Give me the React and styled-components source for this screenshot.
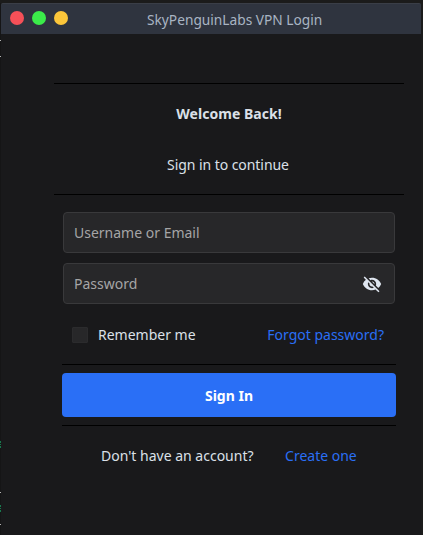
import React from "react";
import styled, { createGlobalStyle } from "styled-components";
import { MdVisibilityOff } from "react-icons/md";

const GlobalStyle = createGlobalStyle`
  * { box-sizing: border-box; }
  body { margin: 0; background: #1b1b1b; }
  button, input { font: inherit; }
`;

const Desktop = styled.div`
  display: grid;
  grid-template-columns: 1px 420px 2px;
  width: 423px;
  height: 535px;
  padding-top: 3px;
  overflow: hidden;
  background: #1b1b1b;
  font: 14px/20px "Noto Sans", sans-serif;
  color: #dbe0e8;
`;

const Backdrop = styled.div`
  display: flex;
  flex-direction: column;
  background: #151516;
`;

const Speck = styled.span`
  height: ${(p) => p.$h || 1}px;
  margin-top: ${(p) => p.$gap}px;
  background: ${(p) => p.$color || "#b5b5b5"};
`;

const Window = styled.main`
  display: flex;
  flex-direction: column;
  background: #19191b;
`;

const TitleBar = styled.header`
  display: grid;
  grid-template-columns: 146px 1fr;
  align-items: center;
  height: 31px;
  flex: none;
  border-top: 1px solid #3a3e47;
  border-radius: 2px 2px 0 0;
  background: #2f343f;
`;

const Controls = styled.div`
  display: flex;
  gap: 8px;
  padding: 0 0 2px 9px;
`;

const Dot = styled.span`
  width: 14px;
  height: 14px;
  border-radius: 50%;
  background: ${(p) => p.$color};
`;

const Title = styled.h1`
  margin: 0;
  font-size: 15px;
  font-weight: 400;
  line-height: 20px;
  transform: scaleX(0.915);
  transform-origin: left center;
  color: #a9b4c3;
  white-space: nowrap;
`;

const Intro = styled.section`
  display: flex;
  flex-direction: column;
  align-items: center;
  width: 350px;
  height: 112px;
  margin: 49px 0 0 53px;
  padding-top: 20px;
  gap: 31px;
  border-top: 1px solid #000;
  border-bottom: 1px solid #000;
`;

const Heading = styled.h2`
  margin: 0;
  font-size: 14px;
  font-weight: 700;
  line-height: 20px;
  letter-spacing: 0.05px;
`;

const Subheading = styled.p`
  margin: 0;
  padding-right: 2px;
  letter-spacing: -0.06px;
`;

const Text = styled.span`
  white-space: nowrap;
`;

const Form = styled.form`
  display: flex;
  flex-direction: column;
  width: 334px;
  margin: 17px 0 0 61px;
`;

const Field = styled.label`
  display: flex;
  align-items: center;
  height: 41px;
  margin: 0 1px 10px;
  padding: 0 12px 0 10px;
  border: 1px solid #39393b;
  border-radius: 4px;
  background: #272729;
  svg { color: #dfe6f0; flex: none; }
`;

const Input = styled.input`
  flex: 1;
  min-width: 0;
  padding: 0;
  border: 0;
  outline: 0;
  background: transparent;
  color: #dfe3ea;
  &::placeholder { color: #a5a5a6; opacity: 1; }
`;

const Options = styled.div`
  display: flex;
  justify-content: space-between;
  align-items: center;
  height: 20px;
  margin: 11px 12px 19px 10px;
`;

const Remember = styled.label`
  display: flex;
  align-items: center;
  gap: 10px;
`;

const Checkbox = styled.input`
  appearance: none;
  width: 16px;
  height: 16px;
  margin: 0;
  border: 1px solid #2b2b2d;
  border-radius: 1px;
  background: #272729;
`;

const Link = styled.a`
  color: #2a6ff5;
  text-decoration: none;
  white-space: nowrap;
`;

const Action = styled.div`
  height: 62px;
  padding: 8px 0;
  border-top: 1px solid #000;
  border-bottom: 1px solid #000;
`;

const SignIn = styled.button`
  display: block;
  width: 100%;
  height: 44px;
  padding: 2px 0 0;
  border: 0;
  border-radius: 4px;
  background: #2a6ff6;
  color: #fff;
  font-weight: 700;
`;

const Signup = styled.footer`
  display: flex;
  gap: 31.5px;
  margin: 20px 0 0 39px;
`;

export default function App() {
  return (
    <>
      <GlobalStyle />
      <Desktop>
        <Backdrop>
          <Speck $gap={37} />
          <Speck $gap={15} />
          <Speck $gap={384} $h={2} $color="#18794e" />
          <Speck $gap={1} $h={1} $color="#18794e" />
          <Speck $gap={1} $h={2} $color="#18794e" />
          <Speck $gap={44} />
          <Speck $gap={12} $h={2} $color="#18794e" />
          <Speck $gap={1} $h={1} $color="#18794e" />
          <Speck $gap={1} $h={2} $color="#18794e" />
          <Speck $gap={12} />
        </Backdrop>
        <Window>
          <TitleBar>
            <Controls>
              <Dot $color="#f65058" />
              <Dot $color="#3bec4a" />
              <Dot $color="#fcc63a" />
            </Controls>
            <Title>SkyPenguinLabs VPN Login</Title>
          </TitleBar>
          <Intro>
            <Heading>Welcome Back!</Heading>
            <Subheading>Sign in to continue</Subheading>
          </Intro>
          <Form onSubmit={(e) => e.preventDefault()}>
            <Field>
              <Input placeholder="Username or Email" />
            </Field>
            <Field>
              <Input type="password" placeholder="Password" />
              <MdVisibilityOff size={20} />
            </Field>
            <Options>
              <Remember>
                <Checkbox type="checkbox" />
                <Text>Remember me</Text>
              </Remember>
              <Link>Forgot password?</Link>
            </Options>
            <Action>
              <SignIn>Sign In</SignIn>
            </Action>
            <Signup>
              <Text>Don't have an account?</Text>
              <Link>Create one</Link>
            </Signup>
          </Form>
        </Window>
      </Desktop>
    </>
  );
}
